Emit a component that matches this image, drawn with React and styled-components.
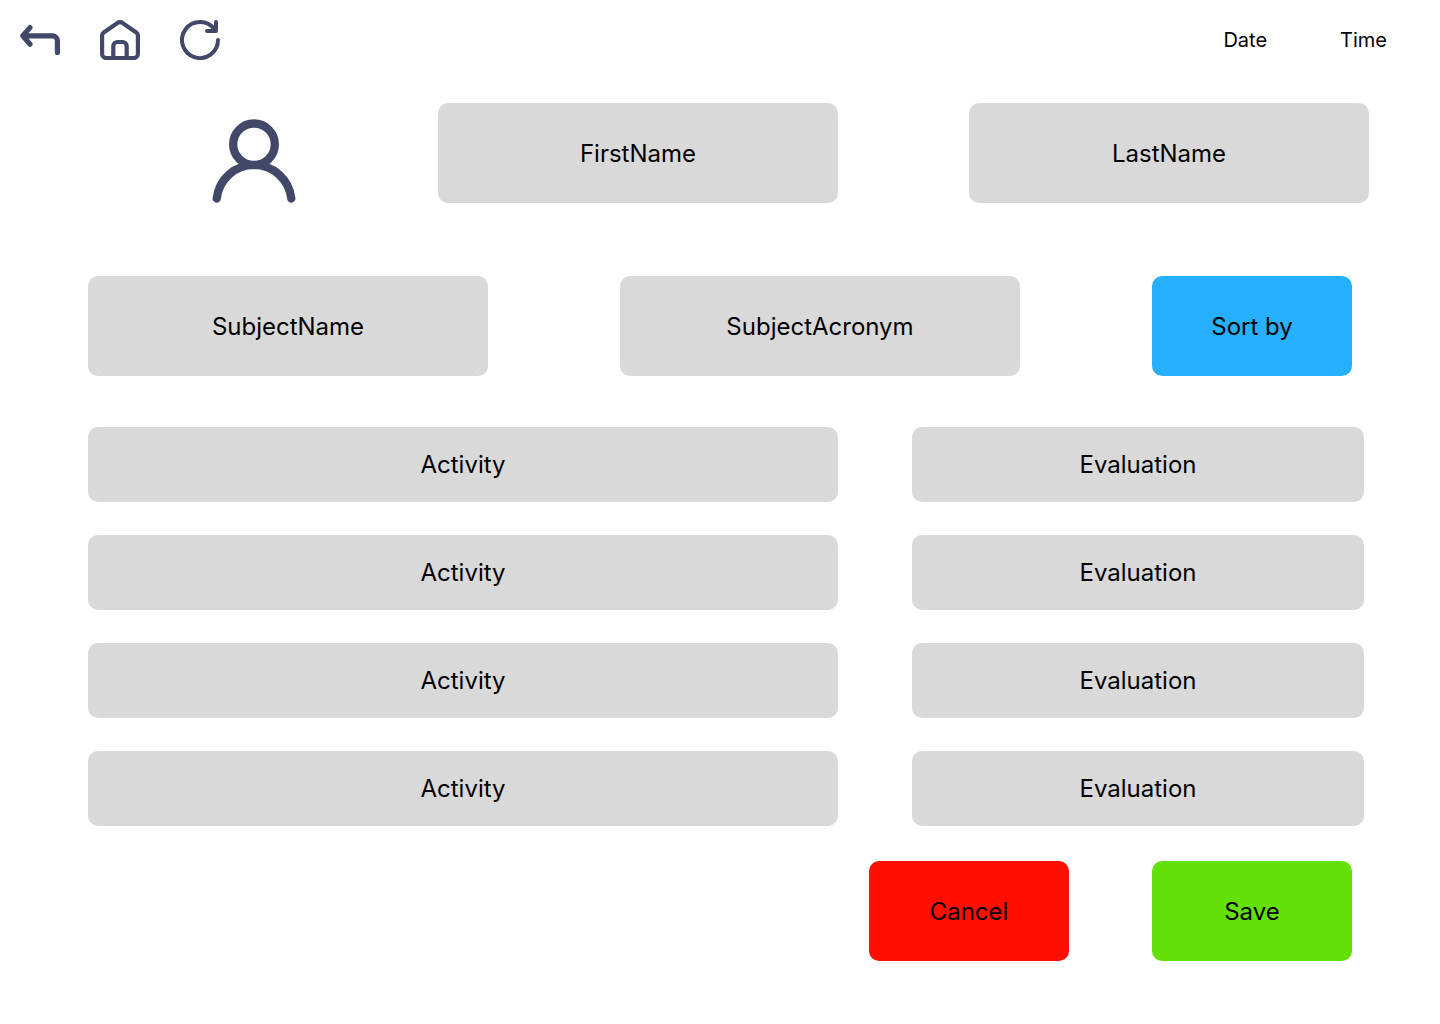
import React from "react";
import styled, { createGlobalStyle } from "styled-components";

const GlobalStyle = createGlobalStyle`
  *, *::before, *::after { box-sizing: border-box; }
  body {
    margin: 0;
    background: #ffffff;
    color: #000000;
    font-family: Inter, "Liberation Sans", sans-serif;
  }
`;

const TopBar = styled.header`
  display: flex;
  align-items: center;
  justify-content: space-between;
  height: 80px;
  padding: 0 53px 0 20px;
`;

const Nav = styled.nav`
  display: flex;
  gap: 40px;
`;

const IconButton = styled.button`
  display: flex;
  width: 40px;
  height: 40px;
  padding: 0;
  border: 0;
  background: none;
  cursor: pointer;
`;

const Icon = styled.svg`
  display: block;
  width: ${(p) => p.$size}px;
  height: ${(p) => p.$size}px;
  fill: none;
  stroke: #434868;
  stroke-linecap: round;
  stroke-linejoin: round;
`;

const Clock = styled.div`
  display: flex;
  gap: 73px;
  font-size: 20px;
  line-height: 24px;
`;

const Profile = styled.section`
  display: grid;
  grid-template-columns: 368fr 931fr;
  align-items: start;
  padding: 23px 71px 0 70px;
`;

const Avatar = styled.div`
  display: flex;
  justify-content: center;
  padding-top: 8px;
`;

const Names = styled.div`
  display: grid;
  grid-template-columns: 1fr 1fr;
  gap: 131px;
`;

const Subject = styled.section`
  display: grid;
  grid-template-columns: 2fr 2fr 1fr;
  gap: 132px;
  padding: 65px 88px 0;
`;

const Box = styled.div`
  display: flex;
  align-items: center;
  justify-content: center;
  height: ${(p) => (p.$compact ? 75 : 100)}px;
  border-radius: 10px;
  background: #d9d9d9;
  font-size: 24px;
  line-height: 29px;
`;

const ActionButton = styled.button`
  width: ${(p) => (p.$fill ? "100%" : "200px")};
  height: 100px;
  padding: 0;
  border: 0;
  border-radius: 10px;
  background: ${(p) => p.$color};
  color: inherit;
  font: inherit;
  font-size: 24px;
  line-height: 29px;
  cursor: pointer;
`;

const ActivityList = styled.ul`
  display: flex;
  flex-direction: column;
  gap: 33px;
  margin: 0;
  padding: 51px 76px 0 88px;
  list-style: none;
`;

const ActivityRow = styled.li`
  display: grid;
  grid-template-columns: 750fr 452fr;
  gap: 74px;
`;

const Actions = styled.footer`
  display: flex;
  justify-content: flex-end;
  gap: 83px;
  padding: 35px 88px 63px;
`;

const activities = [1, 2, 3, 4].map((id) => ({
  id,
  name: "Activity",
  evaluation: "Evaluation",
}));

export default function App() {
  return (
    <>
      <GlobalStyle />
      <TopBar>
        <Nav>
          <IconButton type="button" aria-label="Back">
            <Icon $size={40} viewBox="0 0 40 40" strokeWidth="5.2">
              <path d="M10 7.6 2.8 15.8 10 24.2M5 15.8H32.4a5 5 0 0 1 5 5V32.4" />
              <path d="M2.8 15.8 7 11v9.600Z" fill="#434868" strokeWidth="2" />
            </Icon>
          </IconButton>
          <IconButton type="button" aria-label="Home">
            <Icon $size={40} viewBox="0 0 40 40" strokeWidth="4.2">
              <path d="M2.1 15.6a4 4 0 0 1 1.6-3.2L17.8 2.8a4 4 0 0 1 4.4 0L36.3 12.4a4 4 0 0 1 1.6 3.2V34a4 4 0 0 1-4 4H6.1a4 4 0 0 1-4-4Z" />
              <path d="M13.3 37V26a4 4 0 0 1 4-4h5.4a4 4 0 0 1 4 4v11" />
            </Icon>
          </IconButton>
          <IconButton type="button" aria-label="Refresh">
            <Icon $size={40} viewBox="0 0 40 40" strokeWidth="4">
              <path d="M38 20a18 18 0 1 1-3.2-10.2" />
              <path d="M36 2v9h-9" />
            </Icon>
          </IconButton>
        </Nav>
        <Clock>
          <span>Date</span>
          <span>Time</span>
        </Clock>
      </TopBar>
      <main>
        <Profile>
          <Avatar>
            <Icon $size={100} viewBox="0 0 24 24" strokeWidth="2" aria-hidden="true">
              <circle cx="12" cy="8" r="5" />
              <path d="M20.95 21a9 9 0 0 0-17.9 0" />
            </Icon>
          </Avatar>
          <Names>
            <Box>FirstName</Box>
            <Box>LastName</Box>
          </Names>
        </Profile>
        <Subject>
          <Box>SubjectName</Box>
          <Box>SubjectAcronym</Box>
          <ActionButton type="button" $fill $color="#27b0ff">
            Sort by
          </ActionButton>
        </Subject>
        <ActivityList>
          {activities.map((a) => (
            <ActivityRow key={a.id}>
              <Box $compact>{a.name}</Box>
              <Box $compact>{a.evaluation}</Box>
            </ActivityRow>
          ))}
        </ActivityList>
      </main>
      <Actions>
        <ActionButton type="button" $color="#ff0f00">
          Cancel
        </ActionButton>
        <ActionButton type="button" $color="#63e005">
          Save
        </ActionButton>
      </Actions>
    </>
  );
}
